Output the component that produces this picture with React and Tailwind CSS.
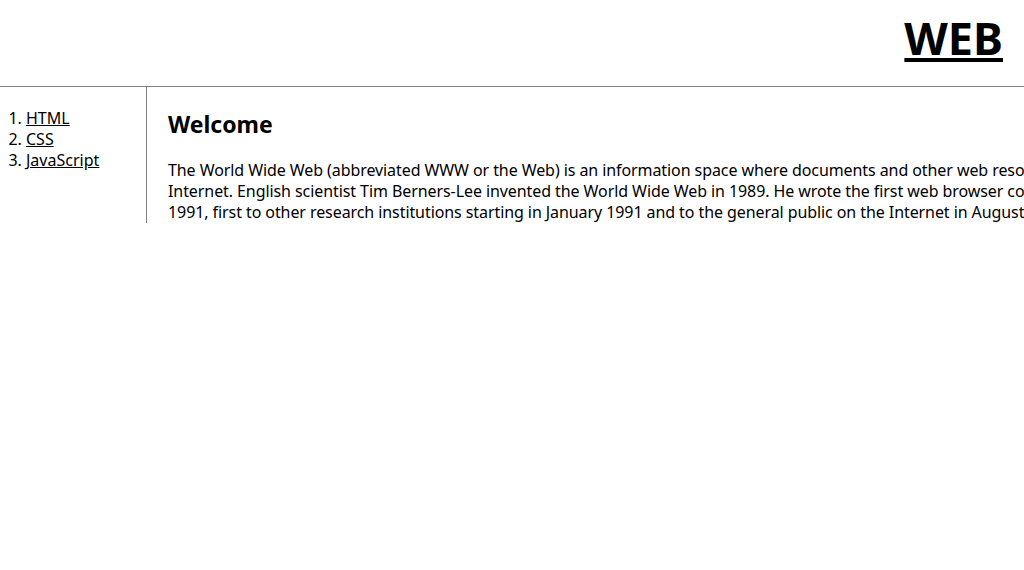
import React from "react";

const topics = [
  { id: 1, title: "HTML", href: "#html" },
  { id: 2, title: "CSS", href: "#css" },
  { id: 3, title: "JavaScript", href: "#js" },
];

const App = () => {
  return (
    <div
      className="w-[1024px] min-h-[570px] bg-white text-black overflow-hidden"
      style={{ fontFamily: '"Noto Sans", "Noto Sans CJK KR", sans-serif' }}
    >
      {/* header */}
      <h1 className="h-[87px] border-b border-[#808080] text-right pr-[21px] pt-[15px] text-[45px] font-bold leading-[45px]">
        <a href="#" className="underline decoration-[4px] underline-offset-[3px]">
          WEB
        </a>
      </h1>

      <div className="grid grid-cols-[147px_1fr]">
        {/* nav */}
        <ol className="border-r border-[#808080] list-decimal pl-[26px] pt-[21px] text-[16px] leading-[21px]">
          {topics.map((t) => (
            <li key={t.id}>
              <a href={t.href} className="underline">
                {t.title}
              </a>
            </li>
          ))}
        </ol>

        {/* article */}
        <div className="pl-[21px] pt-[23px] min-w-0">
          <h2 className="text-[23px] font-bold leading-[28px] mb-[22px]">Welcome</h2>
          <p className="text-[16px] leading-[21px] tracking-[-0.08px] whitespace-nowrap">
            The World Wide Web (abbreviated WWW or the Web) is an information space where documents and other web resources are identified by Uniform Resource Locators (URLs), interlinked by hypertext links, and can be accessed via the
            <br />
            Internet. English scientist Tim Berners-Lee invented the World Wide Web in 1989. He wrote the first web browser computer program in 1990 while employed at CERN in Switzerland. The Web browser was released outside of CERN in
            <br />
            1991, first to other research institutions starting in January 1991 and to the general public on the Internet in August 1991.
          </p>
        </div>
      </div>
    </div>
  );
};

export default App;
